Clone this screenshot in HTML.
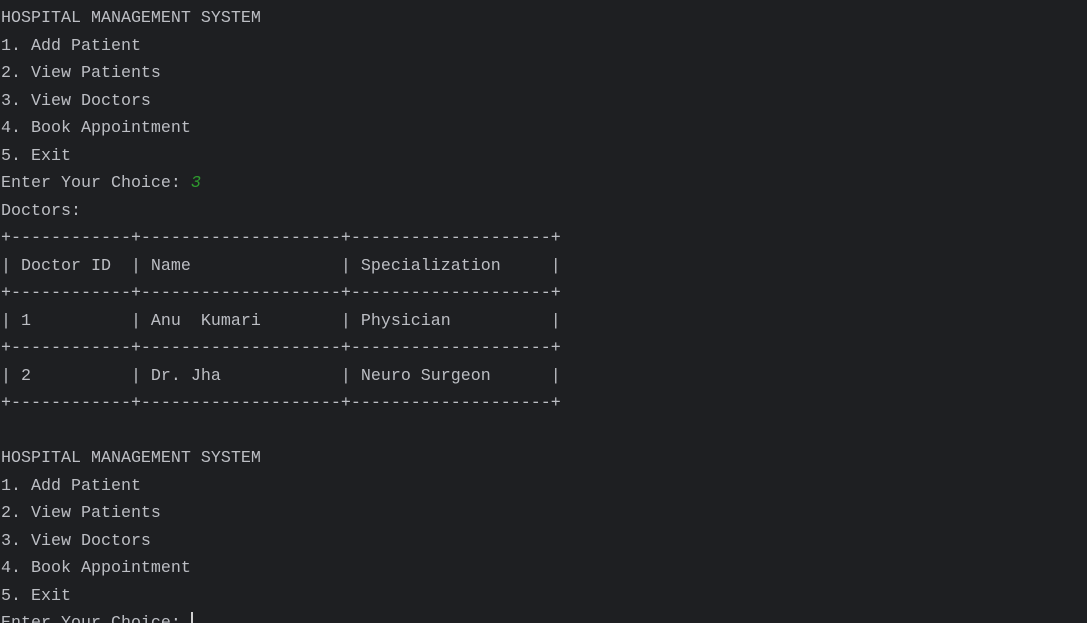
<!DOCTYPE html>
<html><head><style>
html,body{margin:0;padding:0;background:#1e1f22;width:1087px;height:623px;overflow:hidden}
pre{margin:0;padding:5px 0 0 1px;font-family:"Liberation Mono",monospace;font-size:16.67px;line-height:27.5px;color:#bcbec4}
.g{color:#2e9a2e;font-style:italic}
.c{display:inline-block;width:2px;height:18px;background:#d0d0d0;vertical-align:-3px}
</style></head><body><pre>HOSPITAL MANAGEMENT SYSTEM
1. Add Patient
2. View Patients
3. View Doctors
4. Book Appointment
5. Exit
Enter Your Choice: <span class="g">3</span>
Doctors:
+------------+--------------------+--------------------+
| Doctor ID  | Name               | Specialization     |
+------------+--------------------+--------------------+
| 1          | Anu  Kumari        | Physician          |
+------------+--------------------+--------------------+
| 2          | Dr. Jha            | Neuro Surgeon      |
+------------+--------------------+--------------------+

HOSPITAL MANAGEMENT SYSTEM
1. Add Patient
2. View Patients
3. View Doctors
4. Book Appointment
5. Exit
Enter Your Choice: <span class="c"></span></pre></body></html>
